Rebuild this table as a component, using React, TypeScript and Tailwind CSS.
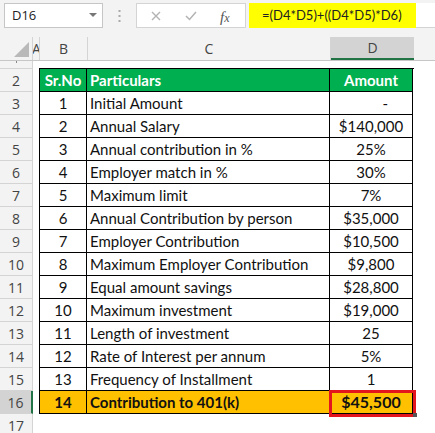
import React from "react";

const rows: { n: number; sr: string; p: string; a: string; dash?: boolean }[] = [
  { n: 3, sr: "1", p: "Initial Amount", a: "-", dash: true },
  { n: 4, sr: "2", p: "Annual Salary", a: "$140,000" },
  { n: 5, sr: "3", p: "Annual contribution in %", a: "25%" },
  { n: 6, sr: "4", p: "Employer match in %", a: "30%" },
  { n: 7, sr: "5", p: "Maximum limit", a: "7%" },
  { n: 8, sr: "6", p: "Annual Contribution by person", a: "$35,000" },
  { n: 9, sr: "7", p: "Employer Contribution", a: "$10,500" },
  { n: 10, sr: "8", p: "Maximum Employer Contribution", a: "$9,800" },
  { n: 11, sr: "9", p: "Equal amount savings", a: "$28,800" },
  { n: 12, sr: "10", p: "Maximum investment", a: "$19,000" },
  { n: 13, sr: "11", p: "Length of investment", a: "25" },
  { n: 14, sr: "12", p: "Rate of Interest per annum", a: "5%" },
  { n: 15, sr: "13", p: "Frequency of Installment", a: "1" },
];

const hdrFont = { fontFamily: '"Open Sans", "DejaVu Sans", sans-serif' };
const cellFont = { fontFamily: 'Lato, "Liberation Sans", sans-serif' };

function RowHead({ n, sel }: { n: number; sel?: boolean }) {
  return (
    <div
      className={`w-[33px] shrink-0 flex items-center justify-center border-b border-r border-[#d4d4d4] text-[14px] text-[#444] ${
        sel ? "bg-[#d3d3d3] border-r-[#217346] border-r-2" : "bg-[#f3f3f3]"
      }`}
      style={hdrFont}
    >
      {n}
    </div>
  );
}

export default function App() {
  return (
    <div className="w-[435px] h-[433px] overflow-hidden bg-white relative">
      {/* toolbar */}
      <div className="h-[37px] bg-[#f3f3f3] flex items-start pt-[3px]" style={hdrFont}>
        <div className="ml-[4px] w-[99px] h-[25px] bg-white border border-[#c6c6c6] flex items-center justify-between pl-[7px] pr-[5px]">
          <span className="text-[13px] text-[#222]">D16</span>
          <svg width="8" height="5" viewBox="0 0 8 5">
            <polygon points="0,0 8,0 4,4" fill="#777" />
          </svg>
        </div>
        <div className="w-[33px] h-[25px] flex items-center justify-center">
          <svg width="3" height="12" viewBox="0 0 3 12">
            <rect x="0.5" y="0" width="2" height="2" fill="#aaa" />
            <rect x="0.5" y="5" width="2" height="2" fill="#aaa" />
            <rect x="0.5" y="10" width="2" height="2" fill="#aaa" />
          </svg>
        </div>
        <div className="w-[110px] h-[25px] bg-white border border-[#d4d4d4] flex items-center relative">
          <svg className="absolute left-[14px] top-[7px]" width="10" height="10" viewBox="0 0 10 10">
            <path d="M1 1 L9 9 M9 1 L1 9" stroke="#b3b3b3" strokeWidth="1.4" />
          </svg>
          <svg className="absolute left-[48px] top-[7px]" width="12" height="10" viewBox="0 0 12 10">
            <path d="M1 5 L4.5 8.5 L11 1" stroke="#b3b3b3" strokeWidth="1.5" fill="none" />
          </svg>
          <span
            className="absolute left-[83px] top-[2px] italic text-[15px] text-[#555]"
            style={{ fontFamily: '"Liberation Serif", serif' }}
          >
            f<span className="text-[12px]">x</span>
          </span>
        </div>
        <div className="ml-[3px] flex-1 h-[25px] bg-white border-b border-[#d4d4d4]">
          <div
            className="w-[167px] h-[25px] bg-[#ffff00] flex items-center pl-[13px] text-[13px] text-[#222] whitespace-nowrap"
            style={cellFont}
          >
            =(D4*D5)+((D4*D5)*D6)
          </div>
        </div>
      </div>

      {/* column headers */}
      <div className="h-[24px] flex bg-[#f3f3f3] border-b border-[#c6c6c6] text-[14px] text-[#444]" style={hdrFont}>
        <div className="w-[33px] shrink-0 border-r border-[#d4d4d4] relative">
          <svg className="absolute left-[14px] top-[5px]" width="15" height="15" viewBox="0 0 15 15">
            <polygon points="15,0 15,15 0,15" fill="#b9b9b9" />
          </svg>
        </div>
        <div className="w-[7px] shrink-0 border-r border-[#d4d4d4] overflow-hidden flex items-center">
          <span className="-ml-[1px]">A</span>
        </div>
        <div className="w-[48px] shrink-0 border-r border-[#d4d4d4] flex items-center justify-center">B</div>
        <div className="w-[243px] shrink-0 border-r border-[#d4d4d4] flex items-center justify-center">C</div>
        <div className="w-[83px] shrink-0 bg-[#d3d3d3] border-b-2 border-[#217346] flex items-center justify-center">
          D
        </div>
        <div className="flex-1" />
      </div>

      {/* row 1 */}
      <div className="h-[8px] flex">
        <div className="w-[33px] shrink-0 bg-[#f3f3f3] border-b border-r border-[#d4d4d4] overflow-hidden flex justify-center">
          <div className="w-[1px] h-[2px] bg-[#888]" />
        </div>
        <div className="ml-[6px] w-[375px] h-full border-b border-black" />
      </div>

      {/* row 2 header */}
      <div className="h-[23px] flex">
        <RowHead n={2} />
        <div className="ml-[6px] flex h-full text-[15px] font-bold text-white" style={cellFont}>
          <div className="w-[48px] bg-[#00b050] border-l border-r border-b border-black flex items-center justify-center">
            Sr.No
          </div>
          <div className="w-[243px] bg-[#00b050] border-r border-b border-black flex items-center pl-[3px]">
            Particulars
          </div>
          <div className="w-[83px] bg-[#00b050] border-r border-b border-black flex items-center justify-center">
            Amount
          </div>
        </div>
      </div>

      {rows.map((r) => (
        <div key={r.n} className="h-[23px] flex">
          <RowHead n={r.n} />
          <div className="ml-[6px] flex h-full text-[15px] text-[#111]" style={cellFont}>
            <div className="w-[48px] border-l border-r border-b border-black flex items-center justify-center">
              {r.sr}
            </div>
            <div className="w-[243px] border-r border-b border-black flex items-center pl-[3px] whitespace-nowrap">
              {r.p}
            </div>
            <div
              className={`w-[83px] border-r border-b border-black flex items-center ${
                r.dash ? "justify-end pr-[24px]" : "justify-center"
              }`}
            >
              {r.a}
            </div>
          </div>
        </div>
      ))}

      {/* row 16 */}
      <div className="h-[23px] flex">
        <RowHead n={16} sel />
        <div className="ml-[6px] flex h-full text-[15px] font-bold text-[#111]" style={cellFont}>
          <div className="w-[48px] bg-[#ffc000] border-l border-r border-b border-black flex items-center justify-center">
            14
          </div>
          <div className="w-[243px] bg-[#ffc000] border-r border-b border-black flex items-center pl-[3px]">
            Contribution to 401(k)
          </div>
          <div className="w-[83px] bg-[#ffc000] border-r border-b border-black flex items-center justify-center text-[16px]">
            $45,500
          </div>
        </div>
      </div>

      {/* row 17 */}
      <div className="h-[23px] flex">
        <RowHead n={17} />
      </div>

      {/* red highlight box */}
      <div className="absolute left-[329px] top-[390px] w-[87px] h-[27px] border-[3px] border-[#e3161d]" />
      <div className="absolute left-[413px] top-[413px] w-[4px] h-[4px] bg-[#555]" />
    </div>
  );
}
